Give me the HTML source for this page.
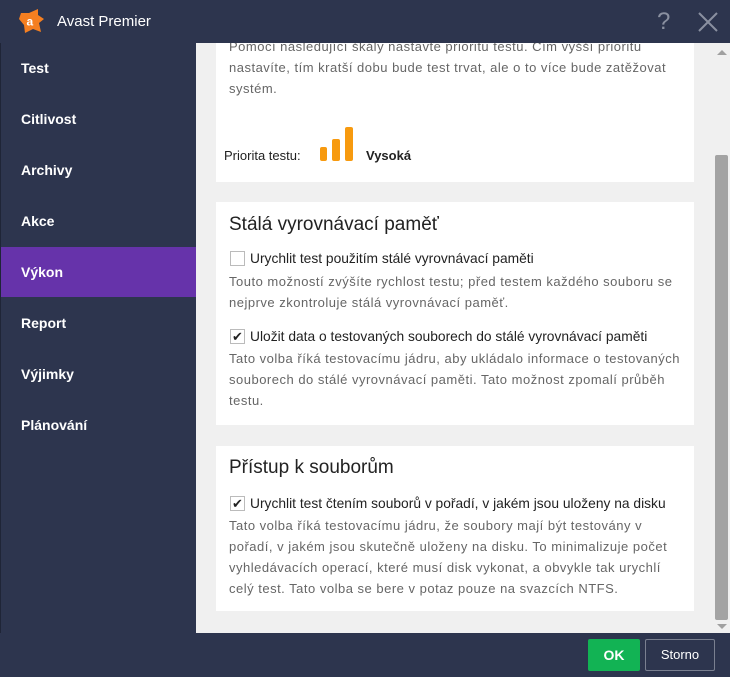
<!DOCTYPE html>
<html><head><meta charset="utf-8"><style>
*{margin:0;padding:0;box-sizing:border-box}
body{width:730px;height:677px;background:#2d354e;font-family:"Liberation Sans",sans-serif;position:relative;overflow:hidden}
.a{position:absolute}
.nav{left:21px;color:#fff;font-weight:bold;font-size:14px}
.content{left:196px;top:43px;width:518px;height:590px;background:#f0f0f0;overflow:hidden}
.p{position:absolute;left:20px;width:478px;background:#fff}
.t{font-size:13px;color:#666;line-height:21px;letter-spacing:0.5px}
.h{font-size:19px;color:#222}
.cb{position:absolute;width:15px;height:15px;border:1px solid #bbb;background:#fff;font-size:13px;line-height:13px;text-align:center;color:#222}
.lab{font-size:13.8px;color:#222}
</style></head><body>
<div class="a" style="left:0;top:43px;width:1px;height:590px;background:#1f2537"></div>
<svg class="a" style="left:18px;top:8px" width="27" height="26" viewBox="0 0 27 26"><path d="M3 5 L11 5 L20 1 L20 7 L26 11 L21 15 L23 24 L15 21 L7 25 L6 17 L1 11 Z" fill="#f57f20"/><circle cx="13" cy="13" r="7" fill="#f57f20"/><text x="8.5" y="17.5" font-size="12" fill="#fff" font-family="Liberation Sans" font-weight="bold">a</text></svg>
<div class="a" style="left:57px;top:13px;color:#fff;font-size:15px">Avast Premier</div>
<div class="a" style="left:657px;top:8px;color:#8a90a0;font-size:24px">?</div>
<svg class="a" style="left:698px;top:12px" width="20" height="20"><path d="M1 1L19 19M19 1L1 19" stroke="#8a90a0" stroke-width="2"/></svg>
<div class="a" style="left:1px;top:247px;width:195px;height:50px;background:#6633aa"></div>
<div class="a nav" style="top:60px">Test</div>
<div class="a nav" style="top:111px">Citlivost</div>
<div class="a nav" style="top:162px">Archivy</div>
<div class="a nav" style="top:213px">Akce</div>
<div class="a nav" style="top:264px">Výkon</div>
<div class="a nav" style="top:315px">Report</div>
<div class="a nav" style="top:366px">Výjimky</div>
<div class="a nav" style="top:417px">Plánování</div>
<div class="a content">
 <div class="p" style="top:-10px;height:149px">
  <div class="a t" style="left:13px;top:3px;width:460px">Pomocí následující škály nastavte prioritu testu. Čím vyšší prioritu nastavíte, tím kratší dobu bude test trvat, ale o to více bude zatěžovat systém.</div>
  <div class="a" style="left:8px;top:115px;font-size:13px;color:#222">Priorita testu:</div>
  <div class="a" style="left:104px;top:114px;width:7px;height:14px;background:#f79a0f;border-radius:2px"></div>
  <div class="a" style="left:116px;top:106px;width:8px;height:22px;background:#f79a0f;border-radius:2px"></div>
  <div class="a" style="left:129px;top:94px;width:8px;height:34px;background:#f79a0f;border-radius:2px"></div>
  <div class="a" style="left:150px;top:115px;font-size:13px;font-weight:bold;color:#222">Vysoká</div>
 </div>
 <div class="p" style="top:159px;height:223px">
  <div class="a h" style="left:13px;top:12px">Stálá vyrovnávací paměť</div>
  <div class="cb" style="left:14px;top:49px"></div>
  <div class="a lab" style="left:34px;top:49px">Urychlit test použitím stálé vyrovnávací paměti</div>
  <div class="a t" style="left:13px;top:69px;width:462px">Touto možností zvýšíte rychlost testu; před testem každého souboru se nejprve zkontroluje stálá vyrovnávací paměť.</div>
  <div class="cb" style="left:14px;top:127px">✔</div>
  <div class="a lab" style="left:34px;top:127px">Uložit data o testovaných souborech do stálé vyrovnávací paměti</div>
  <div class="a t" style="left:13px;top:146px;width:462px">Tato volba říká testovacímu jádru, aby ukládalo informace o testovaných souborech do stálé vyrovnávací paměti. Tato možnost zpomalí průběh testu.</div>
 </div>
 <div class="p" style="top:403px;height:165px">
  <div class="a h" style="left:13px;top:11px">Přístup k souborům</div>
  <div class="cb" style="left:14px;top:50px">✔</div>
  <div class="a lab" style="left:34px;top:50px">Urychlit test čtením souborů v pořadí, v jakém jsou uloženy na disku</div>
  <div class="a t" style="left:13px;top:69px;width:440px">Tato volba říká testovacímu jádru, že soubory mají být testovány v pořadí, v jakém jsou skutečně uloženy na disku. To minimalizuje počet vyhledávacích operací, které musí disk vykonat, a obvykle tak urychlí celý test. Tato volba se bere v potaz pouze na svazcích NTFS.</div>
 </div>
</div>
<div class="a" style="left:714px;top:43px;width:16px;height:590px;background:#f0f0f0"></div>
<div class="a" style="left:715px;top:155px;width:13px;height:465px;background:#a3a3a3;border-radius:2px"></div>
<div class="a" style="left:717px;top:50px;width:0;height:0;border-left:5px solid transparent;border-right:5px solid transparent;border-bottom:5px solid #a0a0a0"></div>
<div class="a" style="left:717px;top:624px;width:0;height:0;border-left:5px solid transparent;border-right:5px solid transparent;border-top:5px solid #a0a0a0"></div>
<div class="a" style="left:588px;top:639px;width:52px;height:32px;background:#12b354;border-radius:2px;color:#fff;font-weight:bold;font-size:14px;text-align:center;line-height:32px">OK</div>
<div class="a" style="left:645px;top:639px;width:70px;height:32px;border:1px solid #7a8090;border-radius:2px;color:#fff;font-size:13px;text-align:center;line-height:30px">Storno</div>
</body></html>
